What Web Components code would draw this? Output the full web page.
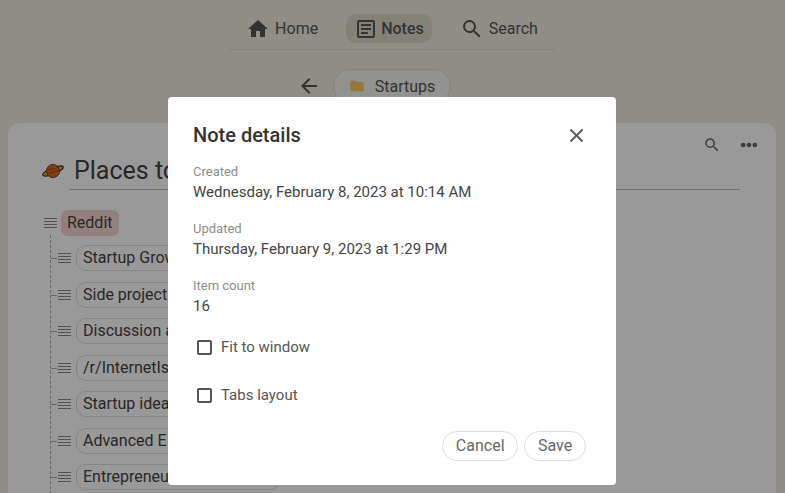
<!DOCTYPE html>
<html>
<head>
<meta charset="utf-8">
<title>Note details</title>
<style>
html, body { margin: 0; height: 100%; }
body {
    background: #efece0;
    font-family: Roboto, "Liberation Sans", sans-serif;
    color: #444;
    overflow: hidden;
}
</style>
</head>
<body>
<app-nav>
    <nav-item icon="home">Home</nav-item>
    <nav-item icon="notes" active>Notes</nav-item>
    <nav-item icon="search">Search</nav-item>
</app-nav>
<crumb-bar>Startups</crumb-bar>
<note-card title-text="Places to">
    <tree-row root>Reddit</tree-row>
    <tree-row>Startup Grow</tree-row>
    <tree-row>Side project</tree-row>
    <tree-row>Discussion a</tree-row>
    <tree-row>/r/InternetIs</tree-row>
    <tree-row>Startup idea</tree-row>
    <tree-row>Advanced E</tree-row>
    <tree-row>Entrepreneu</tree-row>
</note-card>
<note-dialog heading="Note details">
    <detail-field label="Created">Wednesday, February 8, 2023 at 10:14 AM</detail-field>
    <detail-field label="Updated">Thursday, February 9, 2023 at 1:29 PM</detail-field>
    <detail-field label="Item count">16</detail-field>
    <check-row>Fit to window</check-row>
    <check-row>Tabs layout</check-row>
    <pill-button slot="actions">Cancel</pill-button>
    <pill-button slot="actions">Save</pill-button>
</note-dialog>

<script>
const ICONS = {
    home: '<svg width="24" height="24" viewBox="0 0 24 24" fill="#555"><path d="M10 20v-6h4v6h5v-8h3L12 3 2 12h3v8z"/></svg>',
    notes: '<svg width="24" height="24" viewBox="0 0 24 24" fill="#555"><path d="M19 5v14H5V5h14m0-2H5c-1.1 0-2 .9-2 2v14c0 1.1.9 2 2 2h14c1.1 0 2-.9 2-2V5c0-1.1-.9-2-2-2z"/><path d="M14 17H7v-2h7v2zm3-4H7v-2h10v2zm0-4H7V7h10v2z"/></svg>',
    search: '<svg width="24" height="24" viewBox="0 0 24 24" fill="#555"><path d="M15.5 14h-.79l-.28-.27A6.47 6.47 0 0 0 16 9.5 6.5 6.5 0 1 0 9.5 16c1.61 0 3.09-.59 4.23-1.57l.27.28v.79l5 4.99L20.49 19l-4.99-5zm-6 0C7.01 14 5 11.99 5 9.5S7.01 5 9.5 5 14 7.01 14 9.5 11.99 14 9.5 14z"/></svg>'
};

class AppNav extends HTMLElement {
    constructor() {
        super();
        this.attachShadow({ mode: 'open' });
        this.shadowRoot.innerHTML = `
            <style>
                :host {
                    display: flex;
                    justify-content: center;
                    gap: 20px;
                    width: 326px;
                    margin: 0 0 0 229px;
                    padding: 14px 0 6px;
                    border-bottom: 1px solid #dcd9cd;
                }
            </style>
            <slot></slot>
        `;
    }
}

class NavItem extends HTMLElement {
    constructor() {
        super();
        this.attachShadow({ mode: 'open' });
    }

    connectedCallback() {
        const active = this.hasAttribute('active');
        this.shadowRoot.innerHTML = `
            <style>
                :host {
                    display: flex;
                    align-items: center;
                    gap: ${active ? 3 : 5}px;
                    height: 29px;
                    padding: 0 8px;
                    border-radius: 10px;
                    font-size: 16px;
                    color: #555;
                    background: ${active ? '#dcd8ca' : 'transparent'};
                    font-weight: ${active ? 500 : 400};
                }
                svg { display: block; }
            </style>
            ${ICONS[this.getAttribute('icon')]}
            <span><slot></slot></span>
        `;
    }
}

class CrumbBar extends HTMLElement {
    constructor() {
        super();
        this.attachShadow({ mode: 'open' });
        this.shadowRoot.innerHTML = `
            <style>
                :host {
                    display: flex;
                    justify-content: center;
                    align-items: center;
                    gap: 12px;
                    margin: 19px 0 0 0;
                    padding-right: 37px;
                }
                .pill {
                    display: flex;
                    align-items: center;
                    gap: 10px;
                    height: 32px;
                    padding: 0 15px;
                    border: 1px solid #d9d8d2;
                    border-radius: 17px;
                    background: #f4f4f0;
                    font-size: 16px;
                    color: #555;
                }
                svg { display: block; }
            </style>
            <svg width="24" height="24" viewBox="0 0 24 24" fill="#555"><path d="M20 11H7.83l5.59-5.59L12 4l-8 8 8 8 1.41-1.41L7.83 13H20z"/></svg>
            <div class="pill">
                <svg width="16" height="16" viewBox="0 0 24 24" fill="#f4c860"><path d="M10 4H4c-1.1 0-2 .9-2 2v12c0 1.1.9 2 2 2h16c1.1 0 2-.9 2-2V8c0-1.1-.9-2-2-2h-8l-2-2z"/></svg>
                <span><slot></slot></span>
            </div>
        `;
    }
}

class NoteCard extends HTMLElement {
    constructor() {
        super();
        this.attachShadow({ mode: 'open' });
    }

    connectedCallback() {
        this.shadowRoot.innerHTML = `
            <style>
                :host {
                    display: block;
                    margin: 20px 9px 0 8px;
                    height: 370px;
                    overflow: hidden;
                    background: #fff;
                    border-radius: 12px 12px 0 0;
                    padding: 0 36px;
                }
                .tools {
                    display: flex;
                    justify-content: flex-end;
                    align-items: center;
                    gap: 18px;
                    height: 44px;
                    margin-right: -19px;
                }
                .title {
                    display: flex;
                    align-items: center;
                    gap: 8px;
                    height: 22px;
                    margin-top: -7px;
                }
                h1 {
                    margin: 0 0 0 -4px;
                    flex: 1;
                    font-size: 25px;
                    font-weight: 400;
                    color: #444;
                    line-height: 36px;
                    height: 36px;
                    padding-left: 5px;
                    border-bottom: 1px solid #bbb;
                }
                .head { margin: 0 0 0 -3px; height: 22px; }
                .tree { margin: 28px 0 0 0; position: relative; }
                .line {
                    position: absolute;
                    left: 6px;
                    top: 25px;
                    bottom: -200px;
                    border-left: 1px dashed #aaa;
                }
                svg { display: block; }
            </style>
            <div class="tools">
                <svg width="18" height="18" viewBox="0 0 24 24" fill="#666"><path d="M15.5 14h-.79l-.28-.27A6.47 6.47 0 0 0 16 9.5 6.5 6.5 0 1 0 9.5 16c1.61 0 3.09-.59 4.23-1.57l.27.28v.79l5 4.99L20.49 19l-4.99-5zm-6 0C7.01 14 5 11.99 5 9.5S7.01 5 9.5 5 14 7.01 14 9.5 11.99 14 9.5 14z"/></svg>
                <svg width="20" height="20" viewBox="0 0 24 24" fill="#666"><circle cx="5" cy="12" r="2.8"/><circle cx="12" cy="12" r="2.8"/><circle cx="19" cy="12" r="2.8"/></svg>
            </div>
            <div class="title">
                <svg class="head" width="24" height="22" viewBox="0 0 24 22">
                    <ellipse cx="12" cy="11" rx="11" ry="3.2" transform="rotate(-22 12 11)" fill="#e8b820" stroke="#222" stroke-width="1.1"/>
                    <circle cx="12" cy="11" r="6.6" fill="#d96a20" stroke="#5a2a10" stroke-width=".8"/>
                    <path d="M6.4 9.4c3 .6 8-.6 10.6-2.4M6 13c3 .6 9-1 12-3" stroke="#9c4412" stroke-width="1" fill="none"/>
                </svg>
                <h1>${this.getAttribute('title-text')}</h1>
            </div>
            <div class="tree">
                <div class="line"></div>
                <slot></slot>
            </div>
        `;
    }
}

class TreeRow extends HTMLElement {
    constructor() {
        super();
        this.attachShadow({ mode: 'open' });
    }

    connectedCallback() {
        const root = this.hasAttribute('root');
        this.shadowRoot.innerHTML = `
            <style>
                :host {
                    display: flex;
                    align-items: center;
                    gap: ${root ? 4 : 5}px;
                    margin-bottom: ${root ? 9 : 10.5}px;
                    margin-left: ${root ? 0 : 14}px;
                    position: relative;
                }
                .grip {
                    width: 13px;
                    height: 10px;
                    flex: none;
                    background: repeating-linear-gradient(#888 0 1px, transparent 1px 3px);
                }
                .tick {
                    position: absolute;
                    left: -7px;
                    width: 6px;
                    top: 50%;
                    border-top: 1px solid #aaa;
                }
                .label {
                    height: ${root ? 26 : 24}px;
                    line-height: ${root ? 26 : 24}px;
                    padding: 0 6px;
                    font-size: 16px;
                    color: #444;
                    border-radius: 7px;
                    ${root ? 'background: #f3d5d2;' : `
                        width: 190px;
                        border: 1px solid #ddd;
                        border-radius: 10px;
                    `}
                }
            </style>
            ${root ? '' : '<div class="tick"></div>'}
            <div class="grip"></div>
            <div class="label"><slot></slot></div>
        `;
    }
}

class NoteDialog extends HTMLElement {
    constructor() {
        super();
        this.attachShadow({ mode: 'open' });
    }

    connectedCallback() {
        this.shadowRoot.innerHTML = `
            <style>
                :host {
                    position: absolute;
                    inset: 0;
                    display: flex;
                    justify-content: center;
                    align-items: flex-start;
                    padding: 97px 1px 0 0;
                    box-sizing: border-box;
                    background: rgba(0, 0, 0, .4);
                }
                .box {
                    width: 448px;
                    height: 388px;
                    box-sizing: border-box;
                    padding: 24px 30px 24px 25px;
                    background: #fff;
                    border-radius: 4px;
                    display: flex;
                    flex-direction: column;
                }
                header {
                    display: flex;
                    justify-content: space-between;
                    align-items: center;
                    height: 28px;
                    margin-bottom: 15px;
                }
                h2 {
                    margin: 0;
                    font-size: 20px;
                    font-weight: 500;
                    color: #333;
                }
                svg { display: block; margin-right: -1.5px; }
                .fields { flex: 1; }
                .actions {
                    display: flex;
                    justify-content: flex-end;
                    gap: 6px;
                }
            </style>
            <div class="box">
                <header>
                    <h2>${this.getAttribute('heading')}</h2>
                    <svg width="23" height="23" viewBox="0 0 24 24" fill="#555"><path d="M19 6.41 17.59 5 12 10.59 6.41 5 5 6.41 10.59 12 5 17.59 6.41 19 12 13.41 17.59 19 19 17.59 13.41 12z"/></svg>
                </header>
                <div class="fields"><slot></slot></div>
                <div class="actions"><slot name="actions"></slot></div>
            </div>
        `;
    }
}

class DetailField extends HTMLElement {
    constructor() {
        super();
        this.attachShadow({ mode: 'open' });
    }

    connectedCallback() {
        this.shadowRoot.innerHTML = `
            <style>
                :host { display: block; height: 57px; }
                :host(:last-of-type) { height: 45px; }
                .label { font-size: 13px; line-height: 16px; color: #8c8c8c; }
                .value { font-size: 15px; line-height: 24px; color: #444; }
            </style>
            <div class="label">${this.getAttribute('label')}</div>
            <div class="value"><slot></slot></div>
        `;
    }
}

class CheckRow extends HTMLElement {
    constructor() {
        super();
        this.attachShadow({ mode: 'open' });
        this.shadowRoot.innerHTML = `
            <style>
                :host {
                    display: flex;
                    align-items: center;
                    gap: 9px;
                    height: 48px;
                    padding-left: 4px;
                    font-size: 15px;
                    color: #555;
                }
                .box {
                    width: 11px;
                    height: 11px;
                    border: 2px solid #555;
                    border-radius: 2px;
                    flex: none;
                }
            </style>
            <div class="box"></div>
            <span><slot></slot></span>
        `;
    }
}

class PillButton extends HTMLElement {
    constructor() {
        super();
        this.attachShadow({ mode: 'open' });
        this.shadowRoot.innerHTML = `
            <style>
                :host {
                    display: block;
                    height: 28px;
                    line-height: 28px;
                    padding: 0 12.75px;
                    border: 1px solid #ddd;
                    border-radius: 15px;
                    font-size: 16px;
                    color: #666;
                }
            </style>
            <slot></slot>
        `;
    }
}

customElements.define('app-nav', AppNav);
customElements.define('nav-item', NavItem);
customElements.define('crumb-bar', CrumbBar);
customElements.define('note-card', NoteCard);
customElements.define('tree-row', TreeRow);
customElements.define('note-dialog', NoteDialog);
customElements.define('detail-field', DetailField);
customElements.define('check-row', CheckRow);
customElements.define('pill-button', PillButton);
</script>
</body>
</html>
